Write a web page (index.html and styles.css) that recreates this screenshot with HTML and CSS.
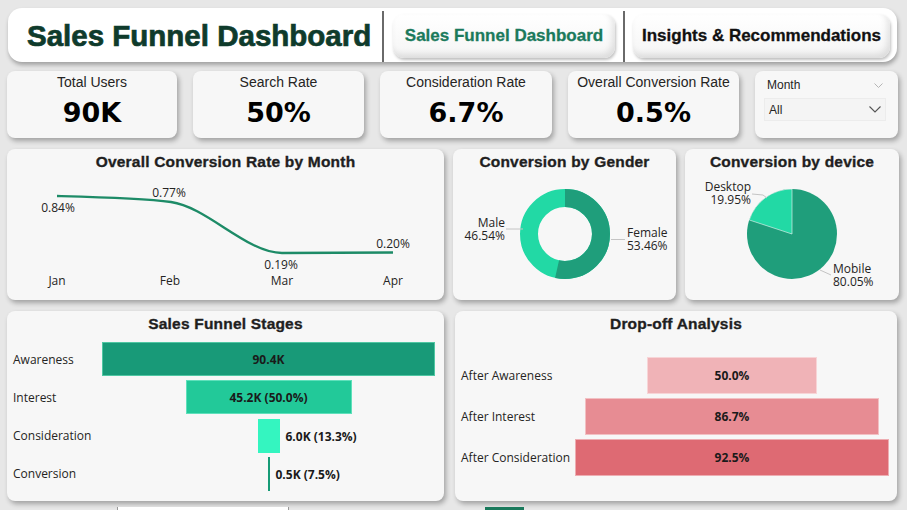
FILE: index.html
```html
<!DOCTYPE html>
<html>
<head>
<meta charset="utf-8">
<title>Sales Funnel Dashboard</title>
<link rel="stylesheet" href="styles.css">
</head>
<body>
<div class="page">
  <header class="topbar">
    <h1 class="title">Sales Funnel Dashboard</h1>
    <span class="sep"></span>
    <button class="nav nav-active">Sales Funnel Dashboard</button>
    <span class="sep"></span>
    <button class="nav nav-plain">Insights &amp; Recommendations</button>
  </header>

  <section class="kpis">
    <div class="card kpi"><div class="kpi-label">Total Users</div><div class="kpi-value">90K</div></div>
    <div class="card kpi"><div class="kpi-label">Search Rate</div><div class="kpi-value">50%</div></div>
    <div class="card kpi"><div class="kpi-label">Consideration Rate</div><div class="kpi-value">6.7%</div></div>
    <div class="card kpi"><div class="kpi-label">Overall Conversion Rate</div><div class="kpi-value">0.5%</div></div>
    <div class="card slicer">
      <div class="slicer-head"><span>Month</span>
        <svg class="chev-sm" width="9" height="5" viewBox="0 0 9 5"><path d="M0.5 0.5 L4.5 4.5 L8.5 0.5" fill="none" stroke="#b5b5b5" stroke-width="1"/></svg>
      </div>
      <div class="slicer-box"><span>All</span>
        <svg class="chev" width="12" height="7" viewBox="0 0 12 7"><path d="M0.5 0.5 L6 6 L11.5 0.5" fill="none" stroke="#555" stroke-width="1.1"/></svg>
      </div>
    </div>
  </section>

  <section class="row2">
    <div class="card chart">
      <h2 class="chart-title">Overall Conversion Rate by Month</h2>
      <svg class="chart-svg" width="437" height="129" viewBox="0 22 437 129">
        <path d="M50,47 C90,48 135,49 164,53 C200,58 240,104 275,104 L386,103.5" fill="none" stroke="#1d8b67" stroke-width="2.4"/>
        <g class="lbl" text-anchor="middle">
          <text x="51" y="63">0.84%</text>
          <text x="162" y="48">0.77%</text>
          <text x="274" y="120">0.19%</text>
          <text x="386" y="99">0.20%</text>
          <text x="50" y="136">Jan</text>
          <text x="163" y="136">Feb</text>
          <text x="275" y="136">Mar</text>
          <text x="386" y="136">Apr</text>
        </g>
      </svg>
    </div>
    <div class="card chart">
      <h2 class="chart-title">Conversion by Gender</h2>
      <svg class="chart-svg" width="223" height="129" viewBox="0 22 223 129">
        <circle cx="112" cy="85" r="36" fill="none" stroke="#22d9a5" stroke-width="18"/>
        <circle cx="112" cy="85" r="36" fill="none" stroke="#1f9e7b" stroke-width="18" stroke-dasharray="120.92 300" transform="rotate(-90 112 85)"/>
        <path d="M53,80 L70,80" stroke="#c4c4c4" stroke-width="1"/>
        <path d="M158,90.5 L172,90.5" stroke="#c4c4c4" stroke-width="1"/>
        <g class="lbl">
          <text text-anchor="end"><tspan x="52" y="78">Male</tspan><tspan x="52" y="90.5">46.54%</tspan></text>
          <text><tspan x="174" y="88">Female</tspan><tspan x="174" y="101">53.46%</tspan></text>
        </g>
      </svg>
    </div>
    <div class="card chart">
      <h2 class="chart-title">Conversion by device</h2>
      <svg class="chart-svg" width="214" height="129" viewBox="0 22 214 129">
        <circle cx="107" cy="85" r="45" fill="#1f9e7b"/>
        <path d="M107,85 L107,40 A45,45 0 0 0 64.25,70.97 Z" fill="#22d9a5" stroke="#f7f7f7" stroke-width="0.6"/>
        <path d="M67,45 L78,46 L82,49" fill="none" stroke="#c4c4c4" stroke-width="1"/>
        <path d="M135,121 L146,126" fill="none" stroke="#c4c4c4" stroke-width="1"/>
        <g class="lbl">
          <text text-anchor="end"><tspan x="66" y="42">Desktop</tspan><tspan x="66" y="54.5">19.95%</tspan></text>
          <text><tspan x="148" y="124">Mobile</tspan><tspan x="148" y="136.5">80.05%</tspan></text>
        </g>
      </svg>
    </div>
  </section>

  <section class="row3">
    <div class="card funnel">
      <h2 class="chart-title">Sales Funnel Stages</h2>
      <div class="f-rows">
        <div class="f-row"><span class="cat">Awareness</span><div class="track"><div class="bar bar-aw" style="width:333px"><span class="in">90.4K</span></div></div></div>
        <div class="f-row"><span class="cat">Interest</span><div class="track"><div class="bar bar-in" style="width:166px"><span class="in">45.2K (50.0%)</span></div></div></div>
        <div class="f-row"><span class="cat">Consideration</span><div class="track"><div class="bar bar-co" style="width:22px"><span class="out">6.0K (13.3%)</span></div></div></div>
        <div class="f-row"><span class="cat">Conversion</span><div class="track"><div class="bar bar-cv" style="width:2px"><span class="out">0.5K (7.5%)</span></div></div></div>
      </div>
    </div>
    <div class="card drop">
      <h2 class="chart-title">Drop-off Analysis</h2>
      <div class="d-rows">
        <div class="d-row"><span class="cat">After Awareness</span><div class="dtrack"><div class="dbar d1" style="width:170px">50.0%</div></div></div>
        <div class="d-row"><span class="cat">After Interest</span><div class="dtrack"><div class="dbar d2" style="width:294px">86.7%</div></div></div>
        <div class="d-row"><span class="cat">After Consideration</span><div class="dtrack"><div class="dbar d3" style="width:314px">92.5%</div></div></div>
      </div>
    </div>
  </section>

  <footer class="strip">
    <span class="tab-white"></span>
    <span class="tab-green"></span>
  </footer>
</div>
</body>
</html>
```

FILE: styles.css
```css
* { box-sizing: border-box; margin: 0; padding: 0; }
html, body { width: 907px; height: 510px; overflow: hidden; }
body {
  background: #e7e7e7;
  font-family: "Liberation Sans", Arial, sans-serif;
  color: #252423;
}
.page { padding-top: 8px; }

/* header */
.topbar {
  margin-left: 8px;
  width: 889px;
  height: 54px;
  padding-top: 2px;
  background: #fff;
  border-radius: 14px;
  box-shadow: 1px 3px 4px rgba(0,0,0,0.3);
  display: flex;
  align-items: center;
}
.title {
  flex: 0 0 374px;
  padding-left: 19px;
  font: bold 29.5px "Liberation Sans", Arial, sans-serif;
  -webkit-text-stroke: 0.7px #0f3b2c;
  color: #0f3b2c;
  white-space: nowrap;
}
.sep {
  align-self: stretch;
  margin-top: 1px;
  width: 2px;
  background: #6a6a6a;
}
.nav {
  height: 44px;
  border: 0;
  border-radius: 11px;
  background: linear-gradient(#ffffff, #f5f5f5);
  box-shadow: inset -3px -4px 6px rgba(0,0,0,0.1), 1px 2px 3px rgba(0,0,0,0.25);
  font: bold 17px "Liberation Sans", Arial, sans-serif;
  white-space: nowrap;
}
.nav-active { width: 222px; margin: 0 8px 0 9px; color: #1b7a5c; -webkit-text-stroke: 0.3px #1b7a5c; }
.nav-plain { width: 257px; margin-left: 8px; color: #111; -webkit-text-stroke: 0.3px #111; }

/* cards */
.card {
  background: #f7f7f7;
  border-radius: 8px;
  box-shadow: 2px 3px 5px rgba(0,0,0,0.3);
}

/* KPI row */
.kpis {
  display: grid;
  grid-template-columns: 170px 171px 172px 171px 143px;
  column-gap: 16px;
  margin: 9px 0 0 7px;
  height: 67px;
}
.kpi { text-align: center; padding-top: 3px; }
.kpi-label { font-size: 14px; line-height: 16px; color: #252423; }
.kpi-value {
  font: bold 27px "DejaVu Sans", sans-serif;
  line-height: 32px;
  margin-top: 7px;
  color: #000;
}

.slicer { padding: 7px 12px 0 9px; }
.slicer-head {
  display: flex;
  justify-content: space-between;
  align-items: center;
  height: 14px;
  padding: 0 3px 0 3px;
  font-size: 12px;
  color: #252423;
}
.slicer-box {
  margin-top: 6px;
  height: 23px;
  background: #f4f4f4;
  border: 1px solid #ececec;
  display: flex;
  justify-content: space-between;
  align-items: center;
  padding: 0 4px 0 4px;
  font-size: 12px;
  color: #252423;
}

/* row 2 */
.row2 {
  display: grid;
  grid-template-columns: 437px 223px 214px;
  column-gap: 9px;
  margin: 11px 0 0 7px;
  height: 151px;
}
.chart { display: flex; flex-direction: column; overflow: hidden; }
.chart-title {
  padding-top: 4px;
  height: 22px;
  font: bold 15.5px "Liberation Sans", Arial, sans-serif;
  letter-spacing: 0.2px;
  line-height: 18px;
  text-align: center;
  color: #1f1f1f;
  -webkit-text-stroke: 0.35px #1f1f1f;
  white-space: nowrap;
}
.chart-svg { display: block; }
.lbl text {
  font-family: "Open Sans", sans-serif;
  font-size: 12px;
  fill: #252423;
}

/* row 3 */
.row3 {
  display: grid;
  grid-template-columns: 437px 442px;
  column-gap: 11px;
  margin: 11px 0 0 7px;
  height: 190px;
}
.cat {
  font-family: "Open Sans", sans-serif;
  font-size: 12px;
  color: #252423;
  padding-left: 6px;
  white-space: nowrap;
}
.f-rows {
  margin-top: 9px;
  display: flex;
  flex-direction: column;
  row-gap: 4.3px;
}
.f-row {
  display: grid;
  grid-template-columns: 95px 333px;
  height: 34px;
  align-items: center;
}
.track { display: flex; justify-content: center; height: 34px; }
.bar {
  position: relative;
  height: 34px;
  display: flex;
  align-items: center;
  justify-content: center;
  font-family: "Open Sans", sans-serif;
  font-weight: 700;
  font-size: 12px;
  color: #1a1a1a;
}
.bar-aw { background: #189a78; border: 1px solid #4fc7a3; }
.bar-in { background: #22c999; border: 1px solid #5fe0bb; }
.bar-co { background: #34f5c0; }
.bar-cv { background: #169b76; }
.in { white-space: nowrap; }
.out {
  position: absolute;
  left: calc(100% + 6px);
  top: 50%;
  transform: translateY(-50%);
  white-space: nowrap;
}

.d-rows {
  margin-top: 24px;
  display: flex;
  flex-direction: column;
  row-gap: 4px;
}
.d-row {
  display: grid;
  grid-template-columns: 120px 314px;
  height: 37px;
  align-items: center;
}
.dtrack { display: flex; justify-content: center; }
.dbar {
  height: 37px;
  display: flex;
  align-items: center;
  justify-content: center;
  font-family: "Open Sans", sans-serif;
  font-weight: 700;
  font-size: 12px;
  color: #1a1a1a;
  border: 1px solid rgba(255,255,255,0.45);
}
.d1 { background: #f0b3b7; }
.d2 { background: #e78c93; }
.d3 { background: #de6a73; }

/* bottom strip */
.strip {
  margin-top: 6px;
  height: 3px;
  display: flex;
}
.tab-white {
  margin-left: 117px;
  width: 172px;
  background: #fff;
  border-left: 1px solid #999;
  border-right: 1px solid #999;
}
.tab-green {
  margin-left: 196px;
  width: 39px;
  background: #1a7a5c;
}
```
